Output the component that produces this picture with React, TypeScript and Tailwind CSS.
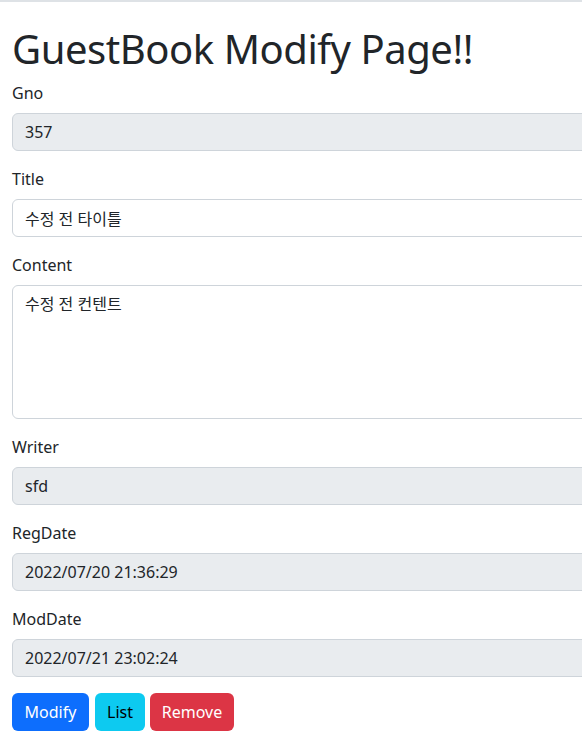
import React from "react";

const font = { fontFamily: '"Noto Sans", "Noto Sans CJK KR", sans-serif' };

type FieldProps = {
    label: string;
    value: string;
    readOnly?: boolean;
    area?: boolean;
};

function Field({ label, value, readOnly = false, area = false }: FieldProps) {
    const base =
        "block w-full rounded-[6px] border border-[#ced4da] px-3 py-[6px] text-base leading-6 text-[#212529] outline-none";
    return (
        <div className="mb-4">
            <label className="mb-2 block pt-px text-base leading-[23px] text-[#212529]">{label}</label>
            {area ? (
                <textarea
                    className={`${base} h-[134px] resize-none bg-white`}
                    defaultValue={value}
                    style={font}
                />
            ) : (
                <input
                    className={`${base} h-[38px] ${readOnly ? "bg-[#e9ecef]" : "bg-white"}`}
                    defaultValue={value}
                    readOnly={readOnly}
                    style={font}
                />
            )}
        </div>
    );
}

export default function App() {
    return (
        <div className="min-h-screen w-full overflow-hidden border-t-2 border-[#dee2e6] bg-white" style={font}>
            <div className="w-[760px] px-3 pt-[23px]">
                <h1 className="mb-2 text-[40px] leading-[48px] font-normal tracking-[-0.45px] text-[#212529]">
                    GuestBook Modify Page!!
                </h1>
                <form>
                    <Field label="Gno" value="357" readOnly />
                    <Field label="Title" value="수정 전 타이틀" />
                    <Field label="Content" value="수정 전 컨텐트" area />
                    <Field label="Writer" value="sfd" readOnly />
                    <Field label="RegDate" value="2022/07/20 21:36:29" readOnly />
                    <Field label="ModDate" value="2022/07/21 23:02:24" readOnly />
                </form>
                <div className="flex">
                    <button className="h-[38px] w-[77px] rounded-[6px] bg-[#0d6efd] text-base text-white">Modify</button>
                    <button className="ml-[6px] h-[38px] w-[50px] rounded-[6px] bg-[#0dcaf0] text-base text-black">List</button>
                    <button className="ml-[5px] h-[38px] w-[84px] rounded-[6px] bg-[#dc3545] text-base text-white">Remove</button>
                </div>
            </div>
        </div>
    );
}
